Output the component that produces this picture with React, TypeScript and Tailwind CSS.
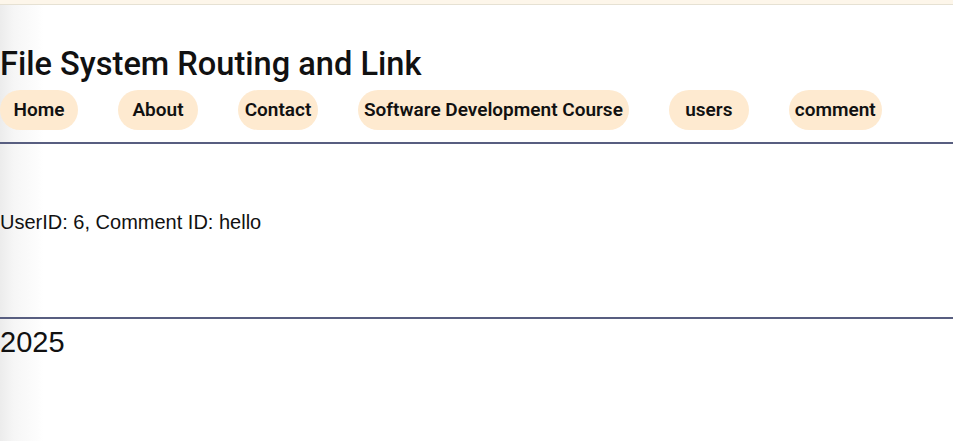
import React from "react";

const links = ["Home", "About", "Contact", "Software Development Course", "users", "comment"];

export default function App() {
  return (
    <div
      className="min-h-[441px] bg-[linear-gradient(to_right,#ececec_0px,#f6f6f6_14px,#ffffff_44px)] text-[#111]"
      style={{ fontFamily: "'Liberation Sans', Arial, sans-serif" }}
    >
      <div className="h-[5px] border-b border-[#e6e1d3] bg-[#fdf6ea]" />
      <header>
        <h1 className="mt-[41px] text-[32.6px] leading-[36px] font-medium" style={{ fontFamily: "Roboto, sans-serif" }}>
          File System Routing and Link
        </h1>
        <nav className="mt-[8px] flex gap-[40px] pb-[12px]">
          {links.map((l) => (
            <a
              key={l}
              className="flex h-[40px] min-w-[80px] items-center justify-center rounded-full bg-[#feead0] px-[6px] text-[19px] font-semibold first:min-w-[78px]"
              style={{ fontFamily: "Roboto, sans-serif" }}
            >
              {l}
            </a>
          ))}
        </nav>
      </header>
      <div className="h-[2px] bg-[#585e80]" />
      <main className="h-[173px] pt-[66px] text-[20px] leading-[24px]">UserID: 6, Comment ID: hello</main>
      <div className="h-[2px] bg-[#585e80]" />
      <footer className="pt-[6px] text-[29px] leading-[34px]">2025</footer>
    </div>
  );
}
